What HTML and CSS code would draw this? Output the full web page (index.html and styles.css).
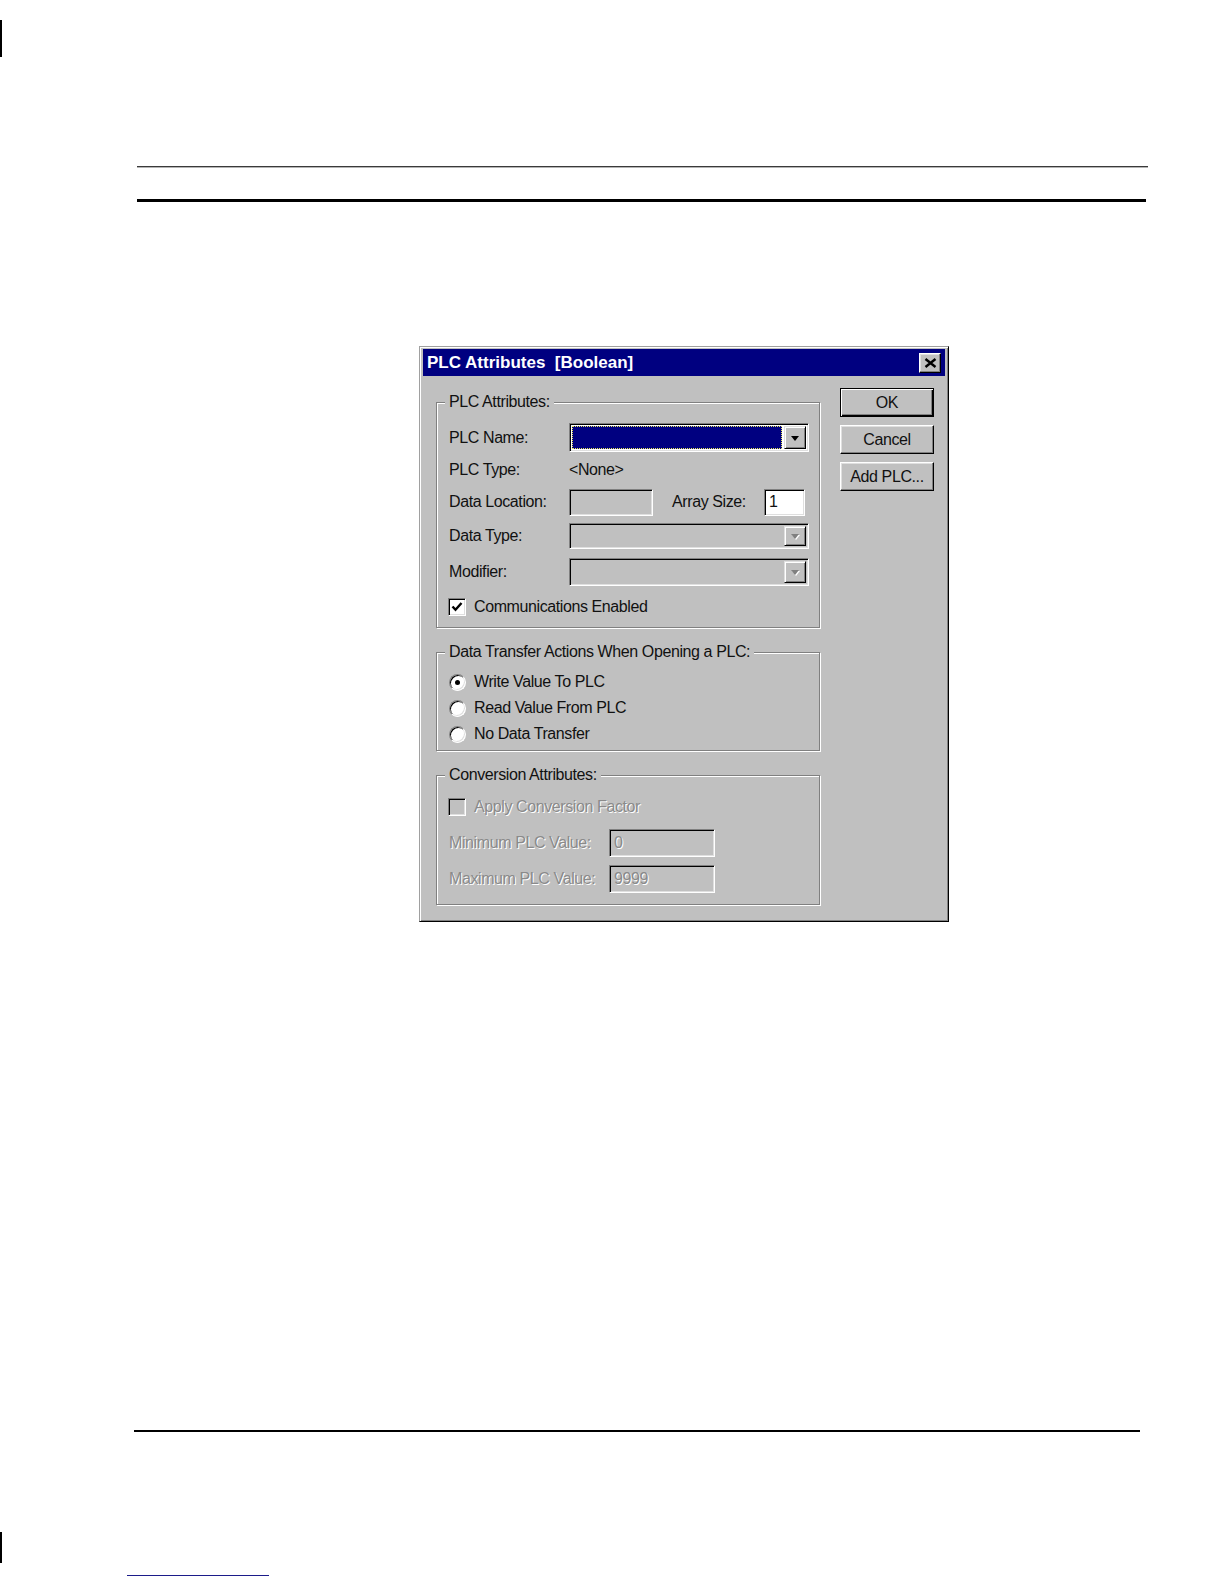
FILE: index.html
```html
<!DOCTYPE html>
<html lang="en">
<head>
<meta charset="utf-8">
<title>PLC Attributes [Boolean]</title>
<link rel="stylesheet" href="styles.css">
</head>
<body>
<div class="page">
  <div class="crop-mark crop-mark-top"></div>
  <div class="rule-thin"></div>
  <div class="rule-thick"></div>

  <div class="figure">
    <div class="dialog">
      <div class="titlebar">
        <span class="title">PLC Attributes&nbsp; [Boolean]</span>
        <div class="close-btn">
          <svg width="13" height="10" viewBox="0 0 13 10"><path d="M1.5 1 L11.5 9 M11.5 1 L1.5 9" stroke="#000" stroke-width="2.4" fill="none"/></svg>
        </div>
      </div>

      <div class="dialog-body">
        <div class="groups">
          <div class="group group-plc">
            <div class="legend">PLC Attributes:</div>
            <div class="plc-grid">
              <div class="label">PLC Name:</div>
              <div class="combo combo-active">
                <div class="combo-value"></div>
                <div class="combo-btn"><span class="arrow"></span></div>
              </div>

              <div class="label">PLC Type:</div>
              <div class="label">&lt;None&gt;</div>

              <div class="label">Data Location:</div>
              <div class="loc-row">
                <div class="field field-location"></div>
                <div class="label array-label">Array Size:</div>
                <div class="field field-white field-array">1</div>
              </div>

              <div class="label">Data Type:</div>
              <div class="combo combo-disabled combo-type">
                <div class="combo-fill"></div>
                <div class="combo-btn"><span class="arrow arrow-disabled"></span></div>
              </div>

              <div class="label">Modifier:</div>
              <div class="combo combo-disabled combo-mod">
                <div class="combo-fill"></div>
                <div class="combo-btn"><span class="arrow arrow-disabled"></span></div>
              </div>

              <div class="check-row span-all">
                <div class="checkbox">
                  <svg width="14" height="14" viewBox="0 0 14 14"><path d="M2.5 6.5 L5.5 9.8 L11.5 3" stroke="#000" stroke-width="2.4" fill="none"/></svg>
                </div>
                <span class="check-text">Communications Enabled</span>
              </div>
            </div>
          </div>

          <div class="group group-transfer">
            <div class="legend">Data Transfer Actions When Opening a PLC:</div>
            <div class="radio-list">
              <div class="radio-row"><span class="radio"><span class="radio-dot"></span></span><span class="check-text">Write Value To PLC</span></div>
              <div class="radio-row"><span class="radio"></span><span class="check-text">Read Value From PLC</span></div>
              <div class="radio-row"><span class="radio"></span><span class="check-text">No Data Transfer</span></div>
            </div>
          </div>

          <div class="group group-conv">
            <div class="legend">Conversion Attributes:</div>
            <div class="conv-grid">
              <div class="check-row span-all">
                <div class="checkbox checkbox-disabled"></div>
                <span class="check-text disabled">Apply Conversion Factor</span>
              </div>
              <div class="label disabled">Minimum PLC Value:</div>
              <div class="field field-conv"><span class="disabled">0</span></div>
              <div class="label disabled">Maximum PLC Value:</div>
              <div class="field field-conv"><span class="disabled">9999</span></div>
            </div>
          </div>
        </div>

        <div class="buttons">
          <div class="btn btn-default">OK</div>
          <div class="btn">Cancel</div>
          <div class="btn">Add PLC...</div>
        </div>
      </div>
    </div>
  </div>

  <div class="rule-bottom"></div>
  <div class="crop-mark crop-mark-bottom"></div>
  <div class="link-line"></div>
</div>
</body>
</html>
```
FILE: styles.css
```css
html, body {
  margin: 0;
  padding: 0;
  background: #ffffff;
}

body {
  font-family: "Liberation Sans", Arial, sans-serif;
  font-size: 16px;
  color: #111111;
}

.page {
  width: 1224px;
  height: 1584px;
  overflow: hidden;
}

/* page furniture */
.crop-mark {
  width: 2px;
  background: #000;
}

.crop-mark-top {
  height: 37px;
  margin-top: 20px;
}

.rule-thin {
  margin: 109px 0 0 137px;
  width: 1011px;
  height: 0;
  border-top: 1px solid #3a3a3a;
  border-bottom: 1px solid #b4b4b4;
}

.rule-thick {
  margin: 31px 0 0 137px;
  width: 1009px;
  height: 3px;
  background: #000;
}

.figure {
  height: 1228px;
  padding-top: 144px;
  box-sizing: border-box;
}

.rule-bottom {
  margin-left: 134px;
  width: 1006px;
  height: 2px;
  background: #000;
}

.crop-mark-bottom {
  height: 31px;
  margin-top: 100px;
}

.link-line {
  margin: 12px 0 0 127px;
  width: 142px;
  height: 1px;
  background: #1c1c8a;
}

/* dialog */
.dialog {
  width: 530px;
  margin-left: 419px;
  box-sizing: border-box;
  background: #c0c0c0;
  border: 1px solid;
  border-color: #a0a0a0 #000 #000 #a0a0a0;
  box-shadow: inset 1px 1px #ffffff, inset -1px -1px #808080;
  padding: 2px 3px 3px 3px;
  letter-spacing: -0.4px;
}

.titlebar {
  height: 27px;
  background: #000080;
  color: #fff;
  display: flex;
  align-items: center;
  justify-content: space-between;
  padding: 0 4px 0 4px;
}

.title {
  font-weight: bold;
  font-size: 17px;
  letter-spacing: 0;
  white-space: pre;
}

.close-btn {
  width: 22px;
  height: 20px;
  box-sizing: border-box;
  background: #c0c0c0;
  border: 1px solid;
  border-color: #fff #000 #000 #fff;
  box-shadow: inset -1px -1px #808080, inset 1px 1px #dfdfdf;
  display: flex;
  align-items: center;
  justify-content: center;
}

.dialog-body {
  display: flex;
  gap: 20px;
  padding: 12px 11px 13px 13px;
}

.groups {
  width: 384px;
  margin-top: 14px;
}

.group {
  box-sizing: border-box;
  border: 1px solid #808080;
  box-shadow: inset 1px 1px #ffffff, 1px 1px #ffffff;
  padding: 0 11px 0 12px;
}

.group + .group {
  margin-top: 24px;
}

.legend {
  width: fit-content;
  height: 18px;
  line-height: 18px;
  margin: -10px 0 0 -4px;
  padding: 0 4px;
  background: #c0c0c0;
  white-space: nowrap;
}

.label {
  white-space: nowrap;
}

/* group 1 */
.group-plc {
  padding-bottom: 2px;
}

.plc-grid {
  margin-top: 10px;
  display: grid;
  grid-template-columns: 120px 1fr;
  grid-template-rows: 33px 32px 32px 36px 35px 36px;
  align-items: center;
}

.span-all {
  grid-column: 1 / -1;
}

.combo {
  width: 240px;
  height: 29px;
  box-sizing: border-box;
  border: 1px solid;
  border-color: #808080 #ffffff #ffffff #808080;
  box-shadow: inset 1px 1px #000, inset -1px -1px #dfdfdf;
  padding: 2px 2px 2px 2px;
  display: flex;
  background: #fff;
}

.combo-disabled {
  background: #c0c0c0;
}

.combo-type {
  height: 26px;
}

.combo-mod {
  height: 28px;
}

.combo-value {
  flex: 1;
  margin: 0 2px 0 0;
  background: #000080;
  outline: 1px dotted #e8e85a;
  outline-offset: -1px;
}

.combo-fill {
  flex: 1;
}

.combo-btn {
  width: 22px;
  box-sizing: border-box;
  background: #c0c0c0;
  border: 1px solid;
  border-color: #dfdfdf #000 #000 #dfdfdf;
  box-shadow: inset 1px 1px #fff, inset -1px -1px #808080;
  display: flex;
  align-items: center;
  justify-content: center;
}

.arrow {
  width: 0;
  height: 0;
  border-left: 4px solid transparent;
  border-right: 4px solid transparent;
  border-top: 5px solid #000;
  margin-top: 1px;
}

.arrow-disabled {
  border-top-color: #808080;
  filter: drop-shadow(1px 1px 0 #fff);
}

.loc-row {
  display: flex;
  align-items: center;
}

.field {
  height: 27px;
  box-sizing: border-box;
  border: 1px solid;
  border-color: #808080 #ffffff #ffffff #808080;
  box-shadow: inset 1px 1px #000, inset -1px -1px #dfdfdf;
  padding: 0 4px;
  display: flex;
  align-items: center;
  background: #c0c0c0;
}

.field-white {
  background: #fff;
}

.field-location {
  width: 84px;
}

.array-label {
  width: 92px;
  margin-left: 19px;
}

.field-array {
  width: 41px;
}

.check-row {
  display: flex;
  align-items: center;
  gap: 8px;
  margin-left: -1px;
}

.checkbox {
  width: 18px;
  height: 18px;
  box-sizing: border-box;
  border: 1px solid;
  border-color: #808080 #ffffff #ffffff #808080;
  box-shadow: inset 1px 1px #000, inset -1px -1px #dfdfdf;
  background: #fff;
  display: flex;
  align-items: center;
  justify-content: center;
  flex: none;
}

.checkbox-disabled {
  background: #c0c0c0;
}

.check-text {
  white-space: nowrap;
}

.disabled {
  color: #8a8a8a;
  text-shadow: 1px 1px 0 #fff;
}

/* group 2 */
.group-transfer {
  padding-bottom: 3px;
}

.radio-list {
  margin-top: 8px;
  display: flex;
  flex-direction: column;
}

.radio-row {
  height: 26px;
  display: flex;
  align-items: center;
  gap: 8px;
}

.radio {
  width: 17px;
  height: 17px;
  box-sizing: border-box;
  border-radius: 50%;
  border: 1px solid;
  border-color: #808080 #ffffff #ffffff #808080;
  box-shadow: inset 1px 1px #000, inset -1px -1px #dfdfdf;
  background: #fff;
  display: flex;
  align-items: center;
  justify-content: center;
  flex: none;
}

.radio-dot {
  width: 5px;
  height: 5px;
  border-radius: 50%;
  background: #000;
}

/* group 3 */
.group-conv {
  padding-bottom: 11px;
}

.conv-grid {
  margin-top: 9px;
  display: grid;
  grid-template-columns: 160px 1fr;
  grid-template-rows: 28px 28px 28px;
  row-gap: 8px;
  align-items: center;
}

.field-conv {
  width: 106px;
  height: 28px;
}

/* buttons */
.buttons {
  width: 94px;
  display: flex;
  flex-direction: column;
  gap: 8px;
  align-self: flex-start;
}

.btn {
  height: 29px;
  box-sizing: border-box;
  background: #c0c0c0;
  border: 1px solid;
  border-color: #fff #000 #000 #fff;
  box-shadow: inset -1px -1px #808080, inset 1px 1px #dfdfdf;
  display: flex;
  align-items: center;
  justify-content: center;
  white-space: nowrap;
}

.btn-default {
  border-color: #000;
  box-shadow: inset 1px 1px #fff, inset -1px -1px #000, inset -2px -2px #808080;
}
```
